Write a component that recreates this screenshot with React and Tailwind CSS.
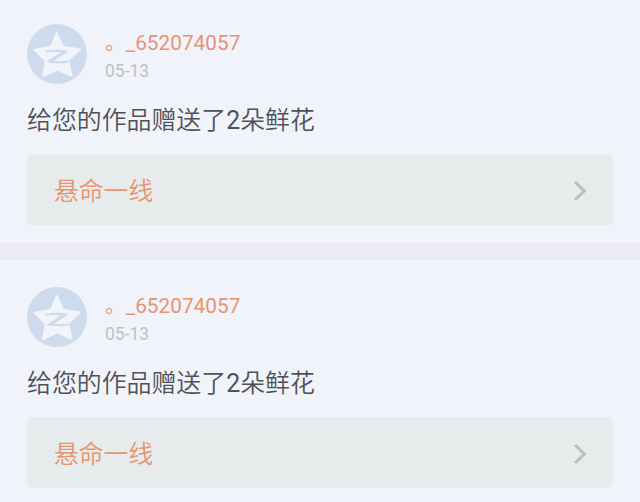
const gifts = [
  { id: 1, user: "。_652074057", date: "05-13", count: 2, work: "悬命一线" },
  { id: 2, user: "。_652074057", date: "05-13", count: 2, work: "悬命一线" },
];

function Avatar() {
  return (
    <svg className="h-[60px] w-[60px] shrink-0" viewBox="0 0 60 60" aria-hidden="true">
      <circle cx="30" cy="30" r="30" fill="#cddbed" />
      <path
        d="M29.8 8 L36.5 22.4 L54 25 L41.8 36.5 L45.2 52.5 L30 46.2 L15.5 53 L18.2 37 L6.5 25.5 L23.5 22.4 Z"
        fill="#f1f4fb"
        stroke="#f1f4fb"
        strokeWidth="1"
        strokeLinejoin="round"
      />
      <path d="M18.5 26.6 Q29 25.2 40.5 26.4 L40.5 28 L27 36.8 Q34 37.6 41.5 36.6 L42 38.4 Q31 40.2 20.5 38.6 L20.5 37 L34 28.3 Q27 27.6 18.5 28.6 Z" fill="#cddbed" />
    </svg>
  );
}

function GiftCard({ gift }) {
  return (
    <article className="h-[246px] shrink-0 bg-[#f1f3fb] px-[27px] pt-[27px]">
      <header className="flex h-[60px] gap-[18px]">
        <Avatar />
        <div className="pt-[5px] font-normal">
          <div className="text-[20.8px] leading-[28px] text-[#e69471]">{gift.user}</div>
          <div className="mt-[2px] text-[17.5px] leading-[24px] text-[#bfc0c8]">{gift.date}</div>
        </div>
      </header>
      <p className="mt-[18px] h-[36px] whitespace-nowrap text-[24.9px] leading-[38px] text-[#505157]">
        给您的作品赠送了<span className="font-normal">{gift.count}</span>朵鲜花
      </p>
      <div className="mt-[16px] flex h-[71px] items-center justify-between rounded-[5px] bg-[#e8ebeb] pr-[26px] pl-[27px]">
        <span className="mt-[5px] text-[24.8px] leading-[36px] text-[#e69471]">{gift.work}</span>
        <svg className="mt-[3px] h-[22px] w-[14px]" viewBox="0 0 14 22" fill="none" stroke="#bcbec0" strokeWidth="3" aria-hidden="true">
          <path d="M2 2 L11.3 11 L2 20" />
        </svg>
      </div>
    </article>
  );
}

export default function App() {
  return (
    <main className="h-[502px] w-[640px] overflow-hidden bg-[#eaebf4] font-['Roboto','Noto_Sans_CJK_SC',sans-serif] font-[350]">
      <div className="-mt-[3px] flex flex-col gap-[17px]">
        {gifts.map((gift) => (
          <GiftCard key={gift.id} gift={gift} />
        ))}
      </div>
    </main>
  );
}
